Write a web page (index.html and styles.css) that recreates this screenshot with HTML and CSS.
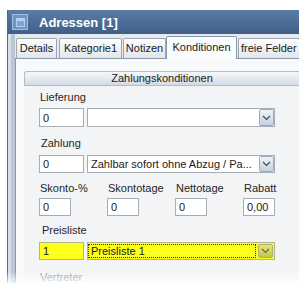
FILE: index.html
```html
<!DOCTYPE html>
<html lang="de">
<head>
  <meta charset="UTF-8" />
  <title>Adressen [1]</title>
  <link rel="stylesheet" href="styles.css">
</head>
<body>

  <div class="window">
    <div class="titlebar">
      <span class="app-icon"><span class="app-icon-inner"></span></span>
      <span class="title">Adressen [1]</span>
    </div>

    <div class="frame">
      <div class="tabs">
        <div class="tab tab-details">Details</div>
        <div class="tab tab-kategorie">Kategorie1</div>
        <div class="tab tab-notizen">Notizen</div>
        <div class="tab tab-konditionen active">Konditionen</div>
        <div class="tab tab-felder">freie Felder</div>
      </div>

      <div class="page">
        <div class="group">
          <div class="group-head">Zahlungskonditionen</div>
          <div class="group-body">

            <div class="label">Lieferung</div>
            <div class="row row-tall">
              <div class="field code">0</div>
              <div class="combo">
                <span class="combo-text"></span>
                <span class="drop"><svg width="9" height="6" viewBox="0 0 9 6"><polyline points="1,1 4.5,4.5 8,1" fill="none" stroke="#3f4b5b" stroke-width="1.2" /></svg></span>
              </div>
            </div>

            <div class="label label-zahlung">Zahlung</div>
            <div class="row row-zahlung">
              <div class="field code">0</div>
              <div class="combo">
                <span class="combo-text">Zahlbar sofort ohne Abzug / Pa...</span>
                <span class="drop"><svg width="9" height="6" viewBox="0 0 9 6"><polyline points="1,1 4.5,4.5 8,1" fill="none" stroke="#3f4b5b" stroke-width="1.2" /></svg></span>
              </div>
            </div>

            <div class="grid grid-labels">
              <div class="label">Skonto-%</div>
              <div class="label">Skontotage</div>
              <div class="label">Nettotage</div>
              <div class="label">Rabatt</div>
            </div>
            <div class="grid grid-fields">
              <div class="field small">0</div>
              <div class="field small">0</div>
              <div class="field small">0</div>
              <div class="field small">0,00</div>
            </div>

            <div class="label label-preis">Preisliste</div>
            <div class="row row-preis">
              <div class="field code marked">1</div>
              <div class="combo marked">
                <span class="combo-text focus">Preisliste 1</span>
                <span class="drop drop-marked"><svg width="9" height="6" viewBox="0 0 9 6"><polyline points="1,1 4.5,4.5 8,1" fill="none" stroke="#6b6b40" stroke-width="1.2" /></svg></span>
              </div>
            </div>

            <div class="label label-next">Vertreter</div>

          </div>
        </div>
      </div>
    </div>
  </div>

  <div class="fade"></div>

</body>
</html>
```

FILE: styles.css
```css
body {
  margin: 0;
  background-color: white;
  font-family: 'Liberation Sans', Arial, sans-serif;
  font-size: 11px;
  color: #1a1a1a;
  height: 283px;
  overflow: hidden;
  position: relative;
}

.window {
  margin: 10px 0 0 7px;
  width: 291px;
  height: 273px;
  border-left: 1px solid #56677d;
  background-color: #cdd6e2;
  overflow: hidden;
}

.titlebar {
  height: 24px;
  display: flex;
  align-items: center;
  gap: 11px;
  padding-left: 4px;
  background: linear-gradient(#5c7ca7, #3f5e88);
}

/* kleines Fenster-Symbol */
.app-icon {
  box-sizing: border-box;
  width: 16px;
  height: 16px;
  border: 1px solid #9dbfe6;
  background-color: #6f95c4;
  display: flex;
  align-items: center;
  justify-content: center;
  flex: none;
}

.app-icon-inner {
  box-sizing: border-box;
  width: 9px;
  height: 9px;
  border: 1px solid #b3d0f0;
  border-top-width: 3px;
  background-color: #7fa4d2;
}

.title {
  color: white;
  font-weight: bold;
  font-size: 13px;
}

.frame {
  padding: 2px 0 0 7px;
  background: linear-gradient(90deg, #d7dee8 0, #d7dee8 3px, #bcc7d5 3px, #bcc7d5 7px, #e6eaef 7px);
  height: 100%;
}

.tabs {
  display: flex;
  align-items: flex-end;
  height: 22px;
  margin-left: 1px;
  background-color: #e6eaef;
}

.tab {
  box-sizing: border-box;
  height: 20px;
  line-height: 18px;
  border: 1px solid #9ba7b5;
  border-bottom: none;
  border-radius: 2px 2px 0 0;
  background: linear-gradient(#fdfdfe, #e2e6eb);
  text-align: center;
  white-space: nowrap;
  overflow: hidden;
  flex: none;
}

.tab-details { width: 41px; margin-right: 2px; }
.tab-kategorie { width: 63px; margin-right: 1px; }
.tab-notizen { width: 43px; }
.tab-konditionen { width: 71px; margin-right: 1px; }
.tab-felder { width: 62px; text-align: left; padding-left: 2px; }

.tab.active {
  height: 23px;
  line-height: 21px;
  margin-bottom: -1px;
  background: #fafbfc;
  border-color: #8c99aa;
  position: relative;
  z-index: 1;
}

.page {
  border-top: 1px solid #8c99aa;
  border-left: 1px solid #8c99aa;
  background-color: #f8f9fa;
  padding: 12px 0 0 8px;
  height: 100%;
}

.group-head {
  box-sizing: border-box;
  height: 15px;
  line-height: 13px;
  border: 1px solid #b3bdca;
  border-right: none;
  border-radius: 3px 0 0 0;
  background: linear-gradient(#f6f8fa, #d4dbe5);
  text-align: center;
  color: #222;
}

.group-body {
  background-color: #f2f4f6;
  padding: 4px 0 0 15px;
  height: 200px;
}

.label {
  height: 14px;
  line-height: 14px;
  padding-left: 1px;
  color: #1f1f1f;
}

.row {
  display: flex;
  gap: 3px;
  margin-top: 4px;
  height: 19px;
}

.label-zahlung { margin-top: 9px; padding-left: 2px; }
.row-zahlung { margin-top: 5px; height: 18px; }
.label-preis { margin-top: 7px; padding-left: 3px; }
.row-preis { margin-top: 5px; height: 18px; }
.label-next { margin-top: 10px; color: #8a9099; }

.field {
  box-sizing: border-box;
  border: 1px solid #a6adb6;
  background-color: white;
  padding-left: 3px;
  display: flex;
  align-items: center;
}

.code {
  width: 45px;
  height: 100%;
}

.combo {
  box-sizing: border-box;
  width: 188px;
  height: 100%;
  border: 1px solid #a6adb6;
  background-color: white;
  display: flex;
}

.combo-text {
  flex: 1;
  padding-left: 3px;
  display: flex;
  align-items: center;
  white-space: nowrap;
  overflow: hidden;
}

.drop {
  box-sizing: border-box;
  width: 15px;
  border: 1px solid #9eabbd;
  border-radius: 2px;
  background: linear-gradient(#f0f3f8, #c6d1e0);
  display: flex;
  align-items: center;
  justify-content: center;
  flex: none;
}

.grid {
  display: grid;
  grid-template-columns: 68px 68px 68px 32px;
}

.grid-labels { margin-top: 8px; }
.grid-fields { margin-top: 3px; }

.small {
  width: 32px;
  height: 18px;
}

.marked {
  background-color: #ffff1e;
  border-color: #b5b58a;
}

.combo.marked {
  padding: 1px 1px 1px 0;
}

.focus {
  border: 1px dotted #333;
  margin-right: 2px;
  padding-left: 2px;
}

.drop-marked {
  border-color: #b0b070;
  background: linear-gradient(#e6e67a, #c4c44c);
}

.fade {
  position: absolute;
  left: 0;
  right: 0;
  bottom: 0;
  height: 12px;
  background: linear-gradient(rgba(255, 255, 255, 0), rgba(255, 255, 255, 0.8));
}
```
